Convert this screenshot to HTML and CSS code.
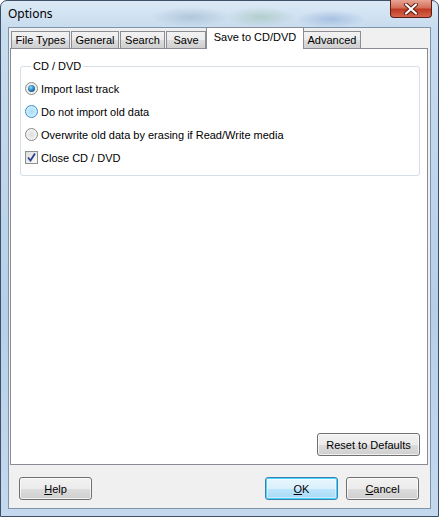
FILE: index.html
```html
<!DOCTYPE html>
<html lang="en">
<head>
    <meta charset="UTF-8">
    <title>Options</title>
    <link rel="stylesheet" href="styles.css">
</head>
<body>
    <div class="window">
        <div class="titlebar">
            <span class="title">Options</span>
            <button class="close" aria-label="Close">
                <svg width="16" height="12" viewBox="0 0 16 12">
                    <path d="M3 1.5 L13 10.5 M13 1.5 L3 10.5" stroke="#5a1a12" stroke-width="4" stroke-linecap="round"/>
                    <path d="M3 1.5 L13 10.5 M13 1.5 L3 10.5" stroke="#fff" stroke-width="2.2" stroke-linecap="round"/>
                </svg>
            </button>
        </div>
        <div class="client">
            <div class="tabs">
                <div class="tab">File Types</div>
                <div class="tab">General</div>
                <div class="tab">Search</div>
                <div class="tab">Save</div>
                <div class="tab active">Save to CD/DVD</div>
                <div class="tab">Advanced</div>
            </div>
            <div class="panel">
                <fieldset class="group">
                    <legend>CD / DVD</legend>
                    <div class="row"><span class="radio checked"></span>Import last track</div>
                    <div class="row"><span class="radio hover"></span>Do not import old data</div>
                    <div class="row"><span class="radio"></span>Overwrite old data by erasing if Read/Write media</div>
                    <div class="row">
                        <span class="check">
                            <svg width="11" height="11" viewBox="0 0 11 11">
                                <path d="M2 5.5 L4.5 8.5 L9 1.5" fill="none" stroke="#2b3f8c" stroke-width="1.8"/>
                            </svg>
                        </span>Close CD / DVD
                    </div>
                </fieldset>
                <div class="spacer"></div>
                <div class="panel-actions">
                    <button class="btn wide">Reset to Defaults</button>
                </div>
            </div>
            <div class="footer">
                <button class="btn"><u>H</u>elp</button>
                <div class="spacer"></div>
                <button class="btn default"><u>O</u>K</button>
                <button class="btn"><u>C</u>ancel</button>
            </div>
        </div>
    </div>
</body>
</html>
```

FILE: styles.css
```css
html, body {
    margin: 0;
    padding: 0;
    background: #fff;
}
body {
    font-family: "Liberation Sans", Arial, sans-serif;
    font-size: 11px;
    color: #000;
}
.window {
    width: 439px;
    height: 517px;
    box-sizing: border-box;
    display: flex;
    flex-direction: column;
    border: 1px solid #3d5068;
    border-radius: 7px 7px 0 0;
    background:
        radial-gradient(ellipse 40px 10px at 190px 16px, rgba(120, 150, 180, 0.35), transparent),
        radial-gradient(ellipse 35px 10px at 260px 16px, rgba(110, 160, 120, 0.3), transparent),
        radial-gradient(ellipse 35px 9px at 330px 18px, rgba(80, 120, 190, 0.3), transparent),
        linear-gradient(to bottom, #dce9f5 0, #c8dcef 26px, #b6cfe8 60%, #c4d9ee 100%);
}
.titlebar {
    height: 26px;
    display: flex;
    justify-content: space-between;
    align-items: flex-start;
    padding-left: 7px;
}
.title {
    font-family: "Noto Sans", "DejaVu Sans", sans-serif;
    font-size: 12px;
    line-height: 26px;
    color: #000;
}
.close {
    width: 42px;
    height: 18px;
    margin: -1px 6px 0 0;
    padding: 0;
    border: 1px solid #5b1e16;
    border-top: none;
    border-radius: 0 0 4px 4px;
    background: linear-gradient(to bottom, #e8a493 0, #d4705a 45%, #bf3a22 55%, #d6664c 100%);
    display: flex;
    align-items: center;
    justify-content: center;
}
.client {
    flex: 1;
    margin: 0 7px 7px;
    border: 1px solid #7f93ab;
    background: #f0f0f0;
    display: flex;
    flex-direction: column;
}
.tabs {
    height: 20px;
    display: flex;
    align-items: flex-end;
    padding-left: 2px;
    position: relative;
    z-index: 1;
}
.tab {
    box-sizing: border-box;
    height: 17px;
    line-height: 16px;
    padding: 0;
    text-align: center;
    margin-right: 1px;
    border: 1px solid #8c8e94;
    border-bottom: none;
    background: linear-gradient(to bottom, #f2f2f2 0, #ebebeb 50%, #dddddd 51%, #cfcfcf 100%);
    white-space: nowrap;
}
.tab:nth-child(1) { width: 59px; }
.tab:nth-child(2) { width: 48px; }
.tab:nth-child(3) { width: 45px; }
.tab:nth-child(4) { width: 40px; margin-right: 0; }
.tab:nth-child(6) { width: 58px; }
.tab.active {
    width: 98px;
    height: 22px;
    line-height: 18px;
    margin: 0 -1px -1px 0;
    background: #fff;
    border-color: #898c95;
}
.panel {
    flex: 1;
    margin: 0 2px 0 1px;
    border: 1px solid #898c95;
    background: #fff;
    display: flex;
    flex-direction: column;
    padding: 10px 7px 8px 9px;
}
.group {
    margin: 0;
    padding: 4px 0 6px 4px;
    border: 1px solid #d5dfe5;
    border-radius: 3px;
}
.group legend {
    margin-left: 6px;
    padding: 0 2px;
    line-height: 14px;
}
.row {
    height: 23px;
    display: flex;
    align-items: center;
    gap: 3px;
}
.radio {
    width: 13px;
    height: 13px;
    box-sizing: border-box;
    border-radius: 50%;
    border: 1px solid #8a8a8a;
    background: radial-gradient(circle at 50% 50%, #dcdcdc 0, #eeeeee 50%, #fafafa 100%);
    display: flex;
    align-items: center;
    justify-content: center;
}
.radio.checked::after {
    content: "";
    width: 7px;
    height: 7px;
    border-radius: 50%;
    background: radial-gradient(circle at 40% 35%, #9bdcf8 0, #2a86c4 45%, #0c3b63 100%);
}
.radio.hover {
    border-color: #3c8fc8;
    background: radial-gradient(circle at 50% 50%, #a9dbf6 0, #c8ecfc 60%, #e6f6fe 100%);
}
.check {
    width: 13px;
    height: 13px;
    box-sizing: border-box;
    border: 1px solid #8e8f8f;
    background: linear-gradient(135deg, #dcdcdc, #fbfbfb);
    display: flex;
    align-items: center;
    justify-content: center;
}
.spacer {
    flex: 1;
}
.panel-actions {
    display: flex;
    justify-content: flex-end;
}
.footer {
    display: flex;
    gap: 8px;
    padding: 12px 11px 8px 10px;
}
.btn {
    width: 73px;
    height: 23px;
    padding: 0;
    font-family: "Liberation Sans", Arial, sans-serif;
    font-size: 11px;
    color: #000;
    border: 1px solid #707070;
    border-radius: 3px;
    background: linear-gradient(to bottom, #f2f2f2 0, #ebebeb 50%, #dddddd 51%, #cfcfcf 100%);
    box-shadow: inset 0 0 0 1px rgba(255, 255, 255, 0.7);
}
.btn.wide {
    width: 103px;
}
.btn.default {
    border-color: #3c7fb1;
    box-shadow: inset 0 0 0 1px #48d6fb, inset 0 0 0 2px rgba(255, 255, 255, 0.4);
    background: linear-gradient(to bottom, #eaf6fd 0, #d9f0fc 50%, #bee6fd 51%, #a7d9f5 100%);
}
```
